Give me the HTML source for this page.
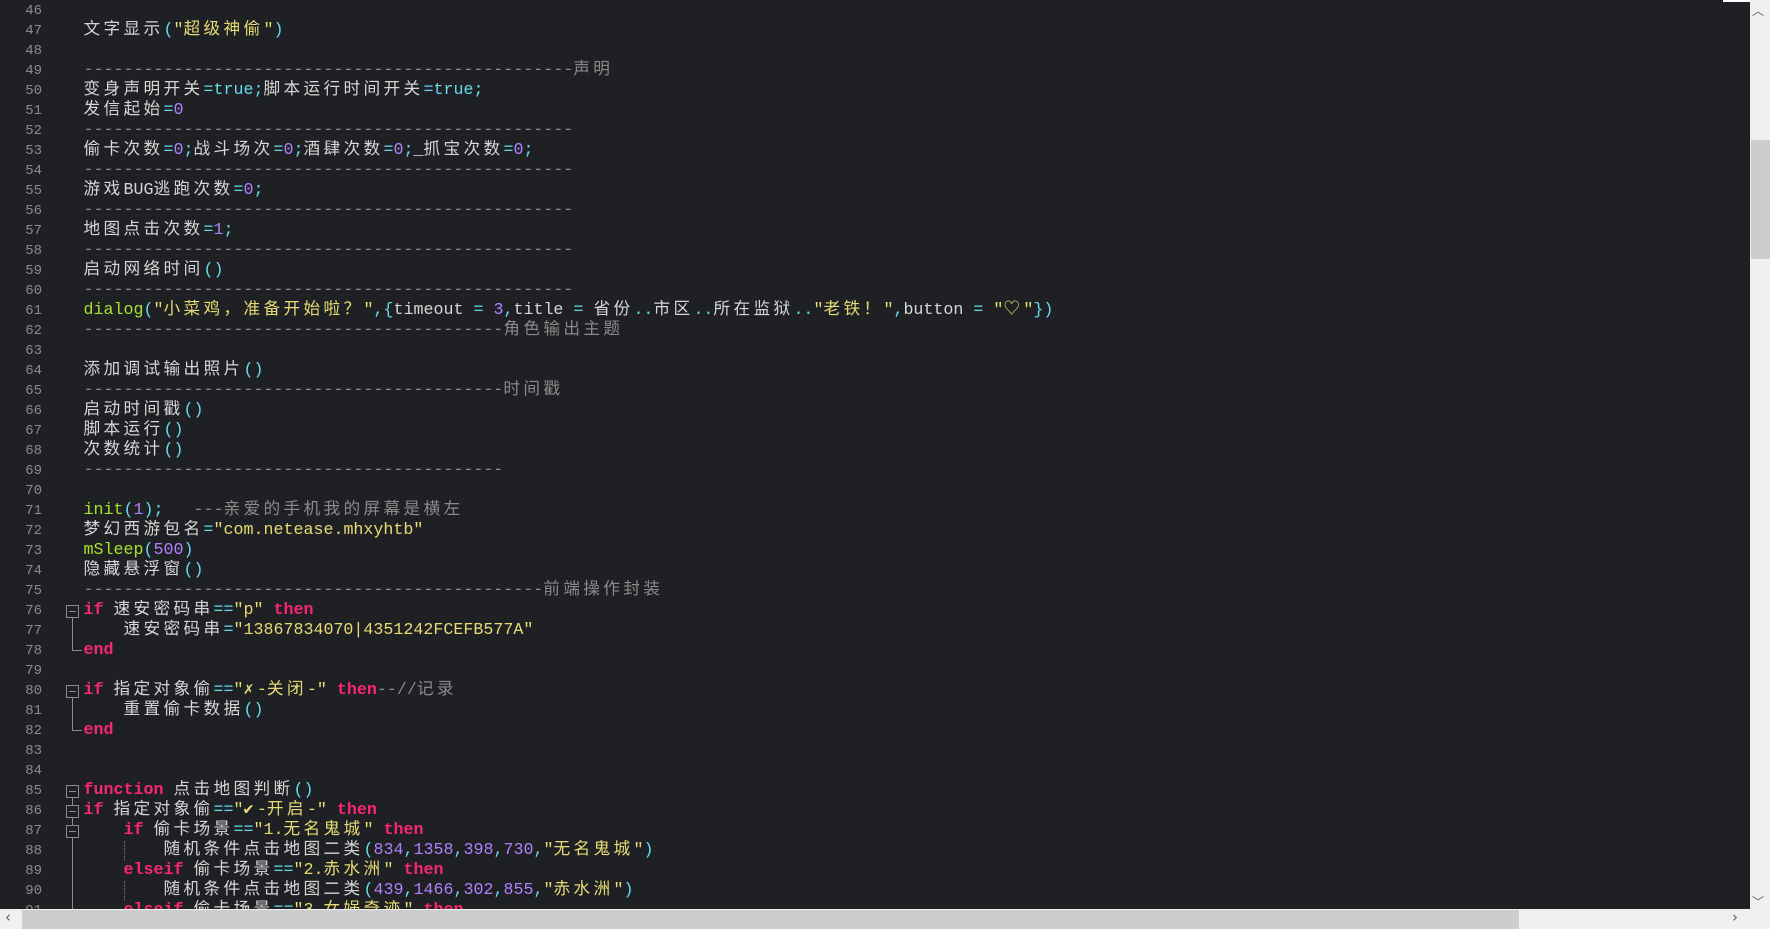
<!DOCTYPE html>
<html><head><meta charset="utf-8">
<style>
html,body{margin:0;padding:0}
body{width:1770px;height:929px;overflow:hidden;background:#1f2023;position:relative;font-family:"Liberation Mono","Noto Sans CJK SC",monospace;font-size:16.67px;color:#d6d6d6}
.ln{position:absolute;left:0;width:42px;text-align:right;color:#8b8b8b;font-size:14px;line-height:20px}
.t{position:absolute;left:83.5px;white-space:pre;line-height:20px}
.c{letter-spacing:3.33px}
.s{color:#e6db74}.o{color:#66d9ef}.n{color:#ae81ff}.k{color:#f92672;font-weight:bold}.cm{color:#8a8a8a}.f{color:#a6e22e}
.box{position:absolute;left:66px;width:13px;height:13px;border:1px solid #8c8c8c;box-sizing:border-box;background:#1f2023}
.box::after{content:"";position:absolute;left:2px;right:2px;top:5px;height:1px;background:#8c8c8c}
.vl{position:absolute;left:72px;width:1px;background:#8c8c8c}
.hl{position:absolute;left:72px;width:10px;height:1px;background:#8c8c8c}
.dg{position:absolute;left:124px;width:0;border-left:1px dotted #777}
</style></head><body>
<div id="code"></div>
<div class="vl" style="top:613px;height:37px"></div><div class="hl" style="top:650px"></div>
<div class="box" style="top:605px"></div>
<div class="vl" style="top:693px;height:37px"></div><div class="hl" style="top:730px"></div>
<div class="box" style="top:685px"></div>
<div class="vl" style="top:793px;height:116px"></div>
<div class="box" style="top:785px"></div>
<div class="box" style="top:805px"></div>
<div class="box" style="top:825px"></div>
<div class="dg" style="top:841px;height:20px"></div>
<div class="dg" style="top:881px;height:20px"></div>
<div style="position:absolute;left:1750px;top:0;width:20px;height:909px;background:#f0f0f0"></div>
<div style="position:absolute;left:1751px;top:140px;width:19px;height:119px;background:#cdcdcd"></div>
<div style="position:absolute;left:1723px;top:0;width:27px;height:2px;background:#fff"></div>
<div style="position:absolute;left:1752px;top:2px;font-size:12px;color:#606060;font-family:'DejaVu Sans',sans-serif">︿</div>
<div style="position:absolute;left:1752px;top:893px;font-size:12px;color:#606060;font-family:'DejaVu Sans',sans-serif">﹀</div>
<div style="position:absolute;left:0;top:909px;width:1770px;height:20px;background:#f0f0f0"></div>
<div style="position:absolute;left:22px;top:910px;width:1497px;height:19px;background:#cdcdcd"></div>
<div style="position:absolute;left:5px;top:908px;font-size:15px;color:#606060;font-family:'DejaVu Sans',sans-serif">‹</div>
<div style="position:absolute;left:1732px;top:908px;font-size:15px;color:#606060;font-family:'DejaVu Sans',sans-serif">›</div>
<script>
var D49='-------------------------------------------------';
var D42='------------------------------------------';
var D46='----------------------------------------------';
var L={
47:'文字显示<span class="o">(</span><span class="s">"超级神偷"</span><span class="o">)</span>',
49:'<span class="cm">'+D49+'声明</span>',
50:'变身声明开关<span class="o">=true;</span>脚本运行时间开关<span class="o">=true;</span>',
51:'发信起始<span class="o">=</span><span class="n">0</span>',
52:'<span class="cm">'+D49+'</span>',
53:'偷卡次数<span class="o">=</span><span class="n">0</span><span class="o">;</span>战斗场次<span class="o">=</span><span class="n">0</span><span class="o">;</span>酒肆次数<span class="o">=</span><span class="n">0</span><span class="o">;</span>_抓宝次数<span class="o">=</span><span class="n">0</span><span class="o">;</span>',
54:'<span class="cm">'+D49+'</span>',
55:'游戏BUG逃跑次数<span class="o">=</span><span class="n">0</span><span class="o">;</span>',
56:'<span class="cm">'+D49+'</span>',
57:'地图点击次数<span class="o">=</span><span class="n">1</span><span class="o">;</span>',
58:'<span class="cm">'+D49+'</span>',
59:'启动网络时间<span class="o">()</span>',
60:'<span class="cm">'+D49+'</span>',
61:'<span class="f">dialog</span><span class="o">(</span><span class="s">"小菜鸡，准备开始啦？"</span><span class="o">,{</span>timeout <span class="o">=</span> <span class="n">3</span><span class="o">,</span>title <span class="o">=</span> 省份<span class="o">..</span>市区<span class="o">..</span>所在监狱<span class="o">..</span><span class="s">"老铁！"</span><span class="o">,</span>button <span class="o">=</span> <span class="s">"♡"</span><span class="o">})</span>',
62:'<span class="cm">'+D42+'角色输出主题</span>',
64:'添加调试输出照片<span class="o">()</span>',
65:'<span class="cm">'+D42+'时间戳</span>',
66:'启动时间戳<span class="o">()</span>',
67:'脚本运行<span class="o">()</span>',
68:'次数统计<span class="o">()</span>',
69:'<span class="cm">'+D42+'</span>',
71:'<span class="f">init</span><span class="o">(</span><span class="n">1</span><span class="o">);</span>   <span class="cm">---亲爱的手机我的屏幕是横左</span>',
72:'梦幻西游包名<span class="o">=</span><span class="s">"com.netease.mhxyhtb"</span>',
73:'<span class="f">mSleep</span><span class="o">(</span><span class="n">500</span><span class="o">)</span>',
74:'隐藏悬浮窗<span class="o">()</span>',
75:'<span class="cm">'+D46+'前端操作封装</span>',
76:'<span class="k">if</span> 速安密码串<span class="o">==</span><span class="s">"p"</span> <span class="k">then</span>',
77:'    速安密码串<span class="o">=</span><span class="s">"13867834070|4351242FCEFB577A"</span>',
78:'<span class="k">end</span>',
80:'<span class="k">if</span> 指定对象偷<span class="o">==</span><span class="s">"✗-关闭-"</span> <span class="k">then</span><span class="cm">--//记录</span>',
81:'    重置偷卡数据<span class="o">()</span>',
82:'<span class="k">end</span>',
85:'<span class="k">function</span> 点击地图判断<span class="o">()</span>',
86:'<span class="k">if</span> 指定对象偷<span class="o">==</span><span class="s">"✔-开启-"</span> <span class="k">then</span>',
87:'    <span class="k">if</span> 偷卡场景<span class="o">==</span><span class="s">"1.无名鬼城"</span> <span class="k">then</span>',
88:'        随机条件点击地图二类<span class="o">(</span><span class="n">834</span><span class="o">,</span><span class="n">1358</span><span class="o">,</span><span class="n">398</span><span class="o">,</span><span class="n">730</span><span class="o">,</span><span class="s">"无名鬼城"</span><span class="o">)</span>',
89:'    <span class="k">elseif</span> 偷卡场景<span class="o">==</span><span class="s">"2.赤水洲"</span> <span class="k">then</span>',
90:'        随机条件点击地图二类<span class="o">(</span><span class="n">439</span><span class="o">,</span><span class="n">1466</span><span class="o">,</span><span class="n">302</span><span class="o">,</span><span class="n">855</span><span class="o">,</span><span class="s">"赤水洲"</span><span class="o">)</span>',
91:'    <span class="k">elseif</span> 偷卡场景<span class="o">==</span><span class="s">"3.女娲奇迹"</span> <span class="k">then</span>'
};
var h='';
for(var n=46;n<=91;n++){
 var y=(n-46)*20+1;
 h+='<div class="ln" style="top:'+y+'px">'+n+'</div>';
 if(L[n]){
  var s=L[n].replace(/([\u3000-\u9fff\uff00-\uffef\u2660-\u27bf])(?![^<]*>)/g,'<span class="c">$1</span>');
  h+='<div class="t" style="top:'+y+'px">'+s+'</div>';
 }
}
document.getElementById('code').innerHTML=h;
</script>
</body></html>
